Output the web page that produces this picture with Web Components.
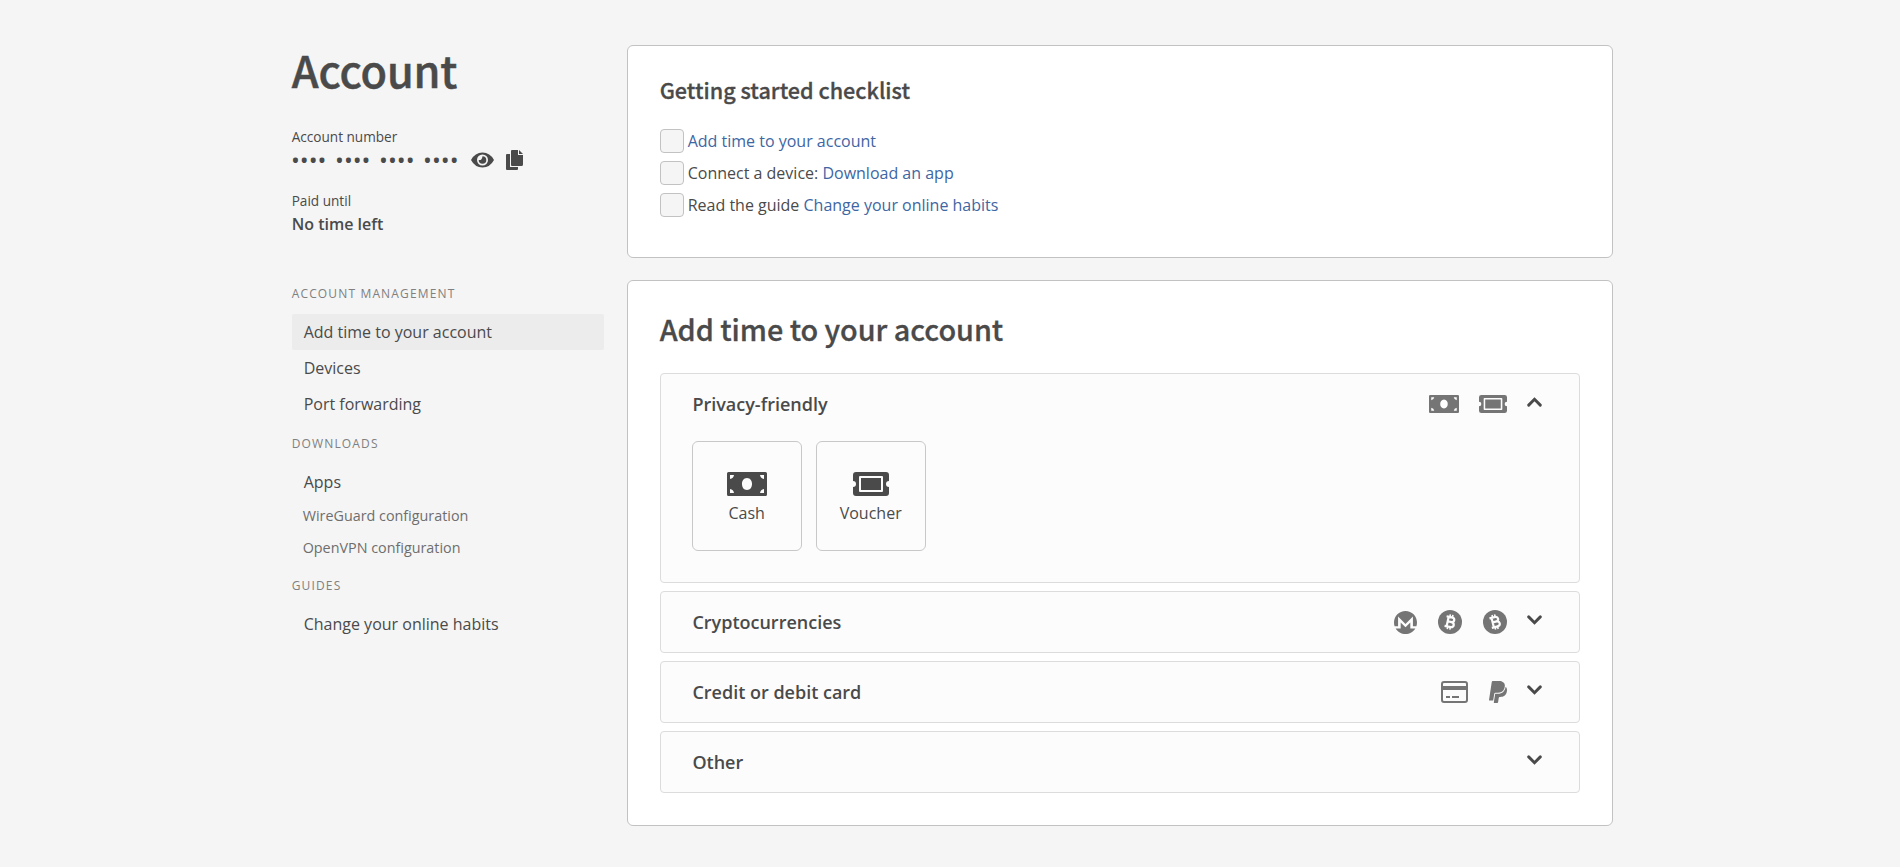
<!DOCTYPE html>
<html lang="en">
<head>
<meta charset="utf-8">
<title>Account</title>
<style>
body{margin:0;background:#f5f5f5;color:#4a4a4a;font:16px/24px "Open Sans",sans-serif;--head:"Noto Sans CJK SC","Noto Sans CJK JP",sans-serif}
</style>
</head>
<body>
<account-page></account-page>
<script>
const ICONS = {
  money: ['0 0 40 24', '<path fill-rule="evenodd" d="M1.500 0H38.500Q40 0 40 1.500V22.500Q40 24 38.500 24H1.500Q0 24 0 22.500V1.500Q0 0 1.500 0ZM3 3V7Q6.500 6.500 7 3ZM33 3Q33.500 6.500 37 7V3ZM3 21H7Q6.500 17.500 3 17ZM37 21V17Q33.500 17.500 33 21ZM20 6C13.300 6 13.300 18 20 18S26.700 6 20 6Z"/>'],
  voucher: ['0 0 36 24', '<path fill-rule="evenodd" d="M3 0H33Q36 0 36 3V9A3 3 0 0 0 36 15V21Q36 24 33 24H3Q0 24 0 21V15A3 3 0 0 0 0 9V3Q0 0 3 0ZM6 5V19Q6 20 7 20H29Q30 20 30 19V5Q30 4 29 4H7Q6 4 6 5ZM8 6H28V18H8Z"/>'],
  chevron: ['0 0 15 10', '<path d="M1.700 1.900 7.500 7.700 13.300 1.900" fill="none" stroke="currentColor" stroke-width="2.900" stroke-linecap="round"/>'],
  monero: ['0 8 496 496', '<path d="M352 384h108.400C417 455.900 338.100 504 248 504S79 455.900 35.600 384H144V256.200L248 361l104-105v128zM88 336V128l159.400 159.400L408 128v208h74.800c8.500-25.100 13.200-52 13.200-80C496 119 385 8 248 8S0 119 0 256c0 28 4.600 54.900 13.200 80H88z"/>'],
  bitcoin: ['0 0 24 24', '<circle cx="12" cy="12" r="12"/><g transform="rotate(12 12 12)" fill="none" stroke="#fcfcfc" stroke-width="2.200"><path d="M7.500 7.100H12.700C16.800 7.100 16.800 11.800 12.700 11.800H9.800M12.700 11.800C17.500 11.800 17.500 16.900 12.700 16.900H7.500M9.600 7.100V16.900"/><path stroke-width="1.600" d="M10.800 4.500V7M13.400 4.500V7M10.800 17V19.500M13.400 17V19.500"/></g>'],
  cash: ['0 0 24 24', '<circle cx="12" cy="12" r="12"/><g transform="rotate(-14 12 12)" fill="none" stroke="#fcfcfc" stroke-width="2.200"><path d="M7.500 7.100H12.700C16.800 7.100 16.800 11.800 12.700 11.800H9.800M12.700 11.800C17.500 11.800 17.500 16.900 12.700 16.900H7.500M9.600 7.100V16.900"/><path stroke-width="1.600" d="M10.800 4.500V7M13.400 4.500V7M10.800 17V19.500M13.400 17V19.500"/></g>'],
  card: ['0 0 27 22', '<rect x="1" y="1" width="25" height="20" rx="2" fill="none" stroke="currentColor" stroke-width="2"/><path d="M1 5H26V9H1ZM5 15H9V17H5ZM11 15H18V17H11Z"/>'],
  paypal: ['0 28 384 455', '<path d="M111.400 295.900c-3.500 19.200-17.400 108.700-21.500 134-.3 1.800-1 2.500-3 2.500H12.300c-7.600 0-13.100-6.600-12.100-13.900L58.800 46.600c1.500-9.600 10.100-16.900 20-16.900 152.300 0 165.100-3.700 204 11.400 60.100 23.300 65.600 79.500 44 140.300-21.500 62.600-72.500 89.500-140.100 90.300-43.400.7-69.500-7-75.300 24.200zM357.100 152c-1.800-1.300-2.500-1.800-3 1.300-2 11.400-5.100 22.500-8.800 33.600-39.900 113.800-150.500 103.900-204.500 103.900-6.100 0-10.100 3.300-10.900 9.400-22.600 140.400-27.100 169.700-27.100 169.700-1 7.100 3.500 12.900 10.600 12.900h63.500c8.600 0 15.700-6.300 17.400-14.900.7-5.400-1.100 6.100 14.400-91.300 4.600-22 14.300-19.700 29.300-19.700 71 0 126.400-28.800 142.900-112.300 6.500-34.800 4.600-71.400-23.800-92.600z"/>'],
  eye: ['0 0 23 16', '<path fill-rule="evenodd" d="M0 8Q4 .5 11.500 .5T23 8Q19 15.500 11.500 15.500T0 8ZM11.500 2.500A5.500 5.500 0 0 0 11.500 13.500A5.500 5.500 0 0 0 11.500 2.500ZM11.500 4.200A3.800 3.800 0 1 1 7.700 8Q10.800 8.800 11.500 4.200Z"/>'],
  copy: ['0 0 17 20', '<path d="M6 0H12V5H17V14.500Q17 16 15.500 16H6Q5 16 5 15V1Q5 0 6 0ZM13 0 17 4H13ZM1 4H4V17H12V19Q12 20 11 20H1Q0 20 0 19V5Q0 4 1 4Z"/>']
};
const define = (name, html) => customElements.define(name, class extends HTMLElement {
  connectedCallback() {
    if (this.shadowRoot) return;
    this.attachShadow({mode: 'open'}).innerHTML = typeof html === 'function' ? html(this) : html;
  }
});
define('ui-icon', el => {
  const [box, body] = ICONS[el.getAttribute('name')];
  return `<style>:host{display:block;flex:none}svg{display:block;fill:currentColor}</style><svg width="${el.getAttribute('w')}" height="${el.getAttribute('h')}" viewBox="${box}" preserveAspectRatio="none">${body}</svg>`;
});
define('nav-group', el => `<style>:host{display:block}.t{box-sizing:border-box;height:42px;line-height:40px;padding-top:2px;font-size:12px;letter-spacing:1.15px;color:#808080;text-transform:uppercase}</style><div class="t">${el.getAttribute('label')}</div><slot></slot>`);
define('nav-item', `<style>:host{display:block;height:36px;line-height:36px;padding-left:12px;border-radius:2px}:host([active]){background:#ececec}:host([small]){height:32px;line-height:32px;padding-left:11px;font-size:14.35px;color:#6e6e6e}</style><slot></slot>`);
define('account-summary', `<style>
:host{display:block;height:227px}
h1{margin:0;font:500 43.2px/48px var(--head);letter-spacing:-.15px;-webkit-text-stroke:.5px currentColor}
.l{font-size:13.6px;line-height:20px}
.a{margin-top:34px}
.n{display:flex;align-items:center;height:26px}
.d{font-size:23.6px;line-height:26px;word-spacing:2.4px;white-space:pre;width:179.7px;margin-left:-.7px}
.c{margin-left:12px}
.p{margin-top:18px}
b{display:block;font-weight:600;line-height:26px}
</style><h1>Account</h1><div class="l a">Account number</div>
<div class="n"><span class="d">•••• •••• •••• ••••</span><ui-icon name="eye" w="23" h="16"></ui-icon><ui-icon class="c" name="copy" w="17" h="20"></ui-icon></div>
<div class="l p">Paid until</div><b>No time left</b>`);
define('content-card', `<style>:host{display:block;box-sizing:border-box;border:1px solid #c2c2c2;border-radius:6px;background:#fff;padding:32px}</style><slot></slot>`);
define('check-item', `<style>:host{display:flex;gap:4px;height:24px;margin-bottom:8px}i{box-sizing:border-box;width:24px;height:24px;border:1px solid #c2c2c2;border-radius:4px;background:#f5f5f5}</style><i></i><span><slot></slot></span>`);
define('text-link', `<style>:host{color:#3e66a3}</style><slot></slot>`);
define('pay-option', el => `<style>:host{box-sizing:border-box;width:110px;height:110px;border:1px solid #c8c8c8;border-radius:6px;display:flex;flex-direction:column;align-items:center;padding-top:30px}span{margin-top:5px}</style><ui-icon name="${el.getAttribute('icon')}" w="${el.getAttribute('w')}" h="24"></ui-icon><span><slot></slot></span>`);
define('pay-section', el => `<style>
:host{display:block;box-sizing:border-box;border:1px solid #dcdcdc;border-radius:4px;background:#fcfcfc;height:62px;margin-bottom:8px}
:host([open]){height:210px}:host(:last-child){margin-bottom:0}
header{display:flex;align-items:center;height:60px;padding:0 36.7px 0 31.7px}
b{font-weight:600;font-size:18px;flex:1}
.i{display:flex;align-items:center;color:#757575;margin-right:20px}
.v{margin-bottom:4px}:host([open]) .v{transform:rotate(180deg)}
.o{display:none}:host([open]) .o{display:flex;gap:14px;padding:7px 31px}
</style><header><b>${el.getAttribute('label')}</b><div class="i"><slot name="icons"></slot></div><ui-icon class="v" name="chevron" w="15" h="10"></ui-icon></header><div class="o"><slot></slot></div>`);
define('account-page', `<style>
:host{display:grid;grid-template-columns:312px 986px;column-gap:23px;width:1321px;padding:45px 0 0 291.7px;align-items:start}
main{display:flex;flex-direction:column;gap:22px}
.one{height:213px}.two{height:546px}
h3,h2{margin:0;font-family:var(--head);font-weight:500;-webkit-text-stroke:.3px currentColor}
h3{font-size:21.6px;line-height:24px;margin-bottom:27px}
h2{font-size:28.8px;line-height:31px;margin-bottom:29px;letter-spacing:-.04px}
.g20{margin-left:20px}.g21{margin-left:21px}
</style>
<aside><account-summary></account-summary>
<nav><nav-group label="Account management"><nav-item active>Add time to your account</nav-item><nav-item>Devices</nav-item><nav-item>Port forwarding</nav-item></nav-group>
<nav-group label="Downloads"><nav-item>Apps</nav-item><nav-item small>WireGuard configuration</nav-item><nav-item small>OpenVPN configuration</nav-item></nav-group>
<nav-group label="Guides"><nav-item>Change your online habits</nav-item></nav-group></nav></aside>
<main><content-card class="one"><h3>Getting started checklist</h3>
<check-item><text-link>Add time to your account</text-link></check-item>
<check-item>Connect a device: <text-link>Download an app</text-link></check-item>
<check-item>Read the guide <text-link>Change your online habits</text-link></check-item></content-card>
<content-card class="two"><h2>Add time to your account</h2>
<pay-section open label="Privacy-friendly"><ui-icon slot="icons" name="money" w="30" h="18"></ui-icon><ui-icon slot="icons" class="g20" name="voucher" w="28" h="18"></ui-icon><pay-option icon="money" w="40">Cash</pay-option><pay-option icon="voucher" w="36">Voucher</pay-option></pay-section>
<pay-section label="Cryptocurrencies"><ui-icon slot="icons" name="monero" w="23" h="23"></ui-icon><ui-icon slot="icons" class="g21" name="bitcoin" w="24" h="24"></ui-icon><ui-icon slot="icons" class="g21" name="cash" w="24" h="24"></ui-icon></pay-section>
<pay-section label="Credit or debit card"><ui-icon slot="icons" name="card" w="27" h="22"></ui-icon><ui-icon slot="icons" class="g21" name="paypal" w="18" h="22"></ui-icon></pay-section>
<pay-section label="Other"></pay-section></content-card></main>`);
</script>
</body>
</html>
